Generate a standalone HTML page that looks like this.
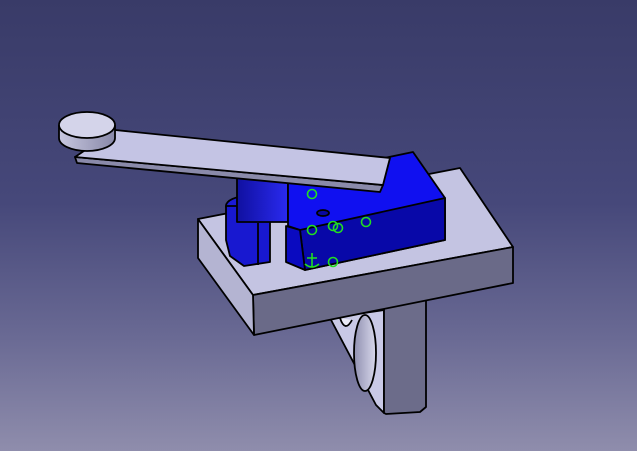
<!DOCTYPE html>
<html><head><style>
html,body{margin:0;padding:0;width:637px;height:451px;overflow:hidden}
body{background:linear-gradient(to bottom,#393b68 0%,#46487a 45%,#6a6a94 75%,#8f8dac 100%)}
svg{position:absolute;left:0;top:0}
</style></head><body>
<svg width="637" height="451" viewBox="0 0 637 451" stroke="#000" stroke-width="1.8" stroke-linejoin="round">
<defs>
<linearGradient id="cyl" x1="0" x2="1"><stop offset="0" stop-color="#1010a0"/><stop offset="1" stop-color="#2a2af0"/></linearGradient>
<linearGradient id="disc" x1="0" x2="1"><stop offset="0" stop-color="#c8c8e0"/><stop offset="1" stop-color="#8888a8"/></linearGradient>
<linearGradient id="hole" x1="0" x2="1"><stop offset="0" stop-color="#9090b0"/><stop offset="1" stop-color="#d8d8ec"/></linearGradient>
</defs>
<polygon points="330,318 384,310 384,413 376,405" fill="#c9c9e6"/>
<ellipse cx="365" cy="353" rx="11" ry="38" fill="url(#hole)"/>
<path d="M340,318 q5,15 12,2" fill="#eaeaf6"/>
<polygon points="384,305 426,300 426,407 420,412 386,414 384,413" fill="#6c6c8a"/>
<polygon points="198,219 460,168 513,247 253,295" fill="#c4c4e2"/>
<polygon points="253,295 513,247 513,283 254,335" fill="#6a6a88"/>
<polygon points="198,219 253,295 254,335 198,258" fill="#b4b4d2"/>
<ellipse cx="248" cy="206" rx="22" ry="10" fill="#1a1ad8"/>
<polygon points="226,206 270,206 270,262 244,266 230,256 226,240" fill="#1818d0"/>
<line x1="258" y1="223" x2="258" y2="265"/>
<polygon points="237,178 288,178 288,222 237,222" fill="url(#cyl)"/>
<polygon points="288,178 413,152 445,198 445,240 305,270 300,258 300,230 288,226" fill="#1010f0"/>
<polygon points="300,230 445,198 445,240 305,270" fill="#0808a8"/>
<polygon points="286,226 300,230 305,270 286,262" fill="#0a0ac0"/>
<ellipse cx="323" cy="213" rx="6" ry="3" fill="#0808a0"/>
<g fill="none" stroke="#22dd22" stroke-width="1.6">
<circle cx="312" cy="194" r="4.5"/><circle cx="312" cy="230" r="4.5"/><circle cx="333" cy="226" r="4.5"/><circle cx="338" cy="228" r="4.5"/><circle cx="366" cy="222" r="4.5"/><circle cx="333" cy="262" r="4.5"/>
<path d="M312,253 v14 M307,258 h10 M305,264 q7,6 14,0"/>
</g>
<polygon points="75,157 383,185 380,192 77,163" fill="#8a8aaa"/>
<polygon points="115,130 390,158 383,185 75,157" fill="#c4c4e4"/>
<path d="M59,125 v13 a28,13 0 0 0 56,0 v-13" fill="url(#disc)"/>
<ellipse cx="87" cy="125" rx="28" ry="13" fill="#d4d4ea"/>
</svg>
</body></html>
